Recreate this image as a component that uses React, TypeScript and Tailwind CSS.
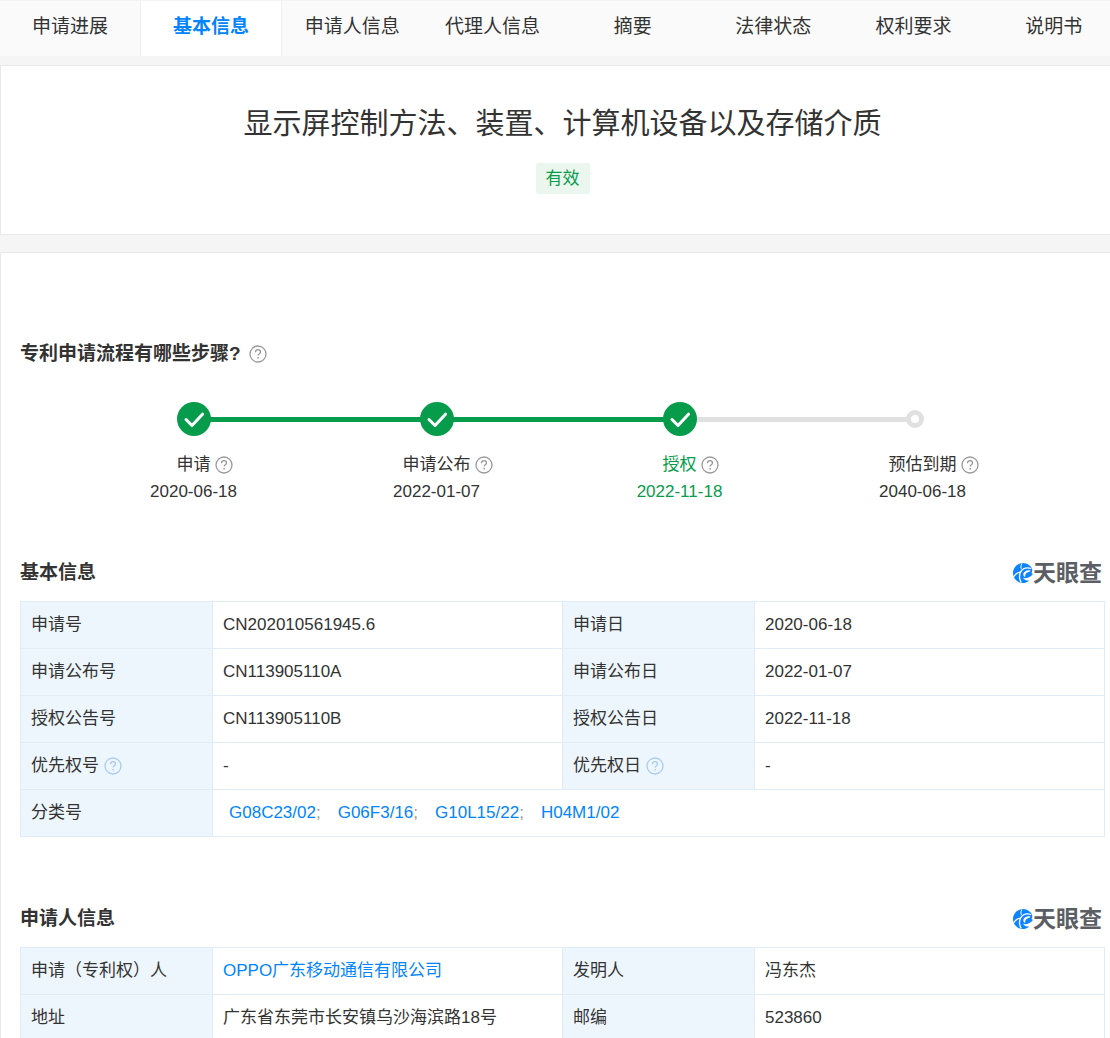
import React from 'react';

const tabs = ['申请进展', '基本信息', '申请人信息', '代理人信息', '摘要', '法律状态', '权利要求', '说明书'];

const steps = [
  { label: '申请', date: '2020-06-18', done: true, line: 'bg-[#079c4b]' },
  { label: '申请公布', date: '2022-01-07', done: true, line: 'bg-[#079c4b]' },
  { label: '授权', date: '2022-11-18', done: true, current: true, line: 'bg-[#e0e0e0]' },
  { label: '预估到期', date: '2040-06-18', done: false },
];

const basicRows = [
  { left: '申请号', leftValue: 'CN202010561945.6', right: '申请日', rightValue: '2020-06-18' },
  { left: '申请公布号', leftValue: 'CN113905110A', right: '申请公布日', rightValue: '2022-01-07' },
  { left: '授权公告号', leftValue: 'CN113905110B', right: '授权公告日', rightValue: '2022-11-18' },
  { left: '优先权号', leftValue: '-', right: '优先权日', rightValue: '-', help: true },
];

const classCodes = ['G08C23/02', 'G06F3/16', 'G10L15/22', 'H04M1/02'];

const HelpIcon = ({ className }: { className: string }) => (
  <svg viewBox="0 0 18 18" className={`w-[18px] h-[18px] shrink-0 ${className}`} fill="none" stroke="currentColor" aria-hidden="true">
    <circle cx="9" cy="9" r="8" strokeWidth="1.3" />
    <path d="M6.500 7.200c0-1.600 1.100-2.500 2.500-2.500s2.500.9 2.500 2.200c0 1.700-2.400 1.900-2.400 3.700" strokeWidth="1.300" />
    <path d="M9.100 12v1.500" strokeWidth="1.500" />
  </svg>
);

const CheckIcon = () => (
  <svg viewBox="0 0 34 34" className="w-[34px] h-[34px] shrink-0" fill="none" aria-hidden="true">
    <circle cx="17" cy="17" r="17" fill="#079c4b" />
    <path d="M9 17.500l6 6L25.500 12.200" stroke="#fff" strokeWidth="3" strokeLinecap="round" strokeLinejoin="round" />
  </svg>
);

const Brand = () => (
  <div className="flex items-center text-[#5c5e64]">
    <svg viewBox="0 0 20 20" className="w-5 h-5" fill="none" aria-hidden="true">
      <path d="M16.500 2.400A10 10 0 1 0 11.500 19.900c2-.3 3.600-1.100 5-2.300-3 .2-5.400-1-6.700-3.200 2.700 1.600 7.500.6 10.100-3.400-.4-.6-.9-.8-1.500-.7.800-1.500 1.100-3 .7-4.500-.4-1.300-1.300-2.500-2.600-3.400z" fill="#0b84ff" />
      <path d="M18.300 5.500C14 4.200 9.800 5.400 7.800 8.600c-2 3.300-1.500 7.300.4 11" stroke="#fff" strokeWidth="1.300" />
      <path d="M7.500 9.100C5 9.300 2.300 11 .5 13.800" stroke="#fff" strokeWidth="1.300" />
      <path d="M9.400 6.600C7.500 5.400 7.400 3 9 .4" stroke="#fff" strokeWidth="1" />
      <path d="M17.600 7.600c-3.200-.9-6.500.4-7.200 3-.4 1.700.4 3 1.900 3.300-.5-2.300.7-4.300 3.200-4.800 1.100-.2 1.900-.7 2.100-1.500z" fill="#fff" />
    </svg>
    <span className="text-[23px] leading-7 font-bold">天眼查</span>
  </div>
);

const SectionHeader = ({ title }: { title: string }) => (
  <div className="flex items-center justify-between pr-[3px]">
    <h2 className="text-[19px] leading-7 font-bold">{title}</h2>
    <Brand />
  </div>
);

const Label = ({ text, help }: { text: string; help?: boolean }) => (
  <th scope="row" className="h-[47px] border border-[#e0ecf6] bg-[#eef6fd] px-[10px] text-left font-normal">
    <span className="flex items-center gap-[5px]">
      {text}
      {help && <HelpIcon className="text-[#a9cbec]" />}
    </span>
  </th>
);

const Value = ({ children, colSpan }: { children: React.ReactNode; colSpan?: number }) => (
  <td colSpan={colSpan} className="border border-[#e0ecf6] px-[10px]">{children}</td>
);

const InfoTable = ({ children }: { children: React.ReactNode }) => (
  <table className="mt-[14px] w-full table-fixed border-collapse leading-6">
    <colgroup>
      <col className="w-[192px]" />
      <col />
      <col className="w-[192px]" />
      <col />
    </colgroup>
    <tbody>{children}</tbody>
  </table>
);

const App: React.FC = () => {
  return (
    <div className="min-h-screen overflow-x-hidden bg-[#f5f5f5] font-['Liberation_Sans','Noto_Sans_CJK_SC',sans-serif] text-[17px] text-[#333]" lang="zh-CN">
      <nav className="grid grid-cols-[140px_142px_repeat(6,1fr)] -mr-[14px] h-14 border-t border-[#f3f3f3] bg-[#fafafa]">
        {tabs.map((tab, i) => (
          <button
            key={tab}
            type="button"
            className={
              i === 1
                ? 'border-x border-[#f0f0f0] bg-white pb-[2px] text-[19px] font-bold text-[#0084ff]'
                : 'pb-[2px] text-[19px]'
            }
          >
            {tab}
          </button>
        ))}
      </nav>

      <header className="mt-[9px] flex flex-col items-center border-y border-l border-[#e9e9e9] bg-white pt-9 pb-10 pl-[14px]">
        <h1 className="text-[29px] leading-[44px]">显示屏控制方法、装置、计算机设备以及存储介质</h1>
        <span className="mt-[17px] rounded-xs bg-[#ebf6ef] px-[10px] leading-[31px] text-[#079c4b]">有效</span>
      </header>

      <main className="mt-[17px] border-t border-l border-[#e9e9e9] bg-white pt-[87px] pr-[5px] pl-[19px]">
        <div className="flex items-center gap-2">
          <h2 className="text-[19px] leading-7 font-bold">专利申请流程有哪些步骤?</h2>
          <HelpIcon className="text-[#999]" />
        </div>

        {/* Application steps */}
        <ol className="mt-[34px] mr-[61px] ml-[52px] grid grid-cols-4">
          {steps.map(step => (
            <li key={step.label} className={step.current ? 'text-[#079c4b]' : ''}>
              <div className="relative flex h-[34px] items-center justify-center">
                {step.line && <span className={`absolute left-1/2 h-[5px] w-full ${step.line}`} />}
                <span className="relative">
                  {step.done ? <CheckIcon /> : <span className="mr-4 block h-[18px] w-[18px] rounded-full border-[5px] border-[#e0e0e0] bg-white" />}
                </span>
              </div>
              <div className="mt-4 ml-[22px] flex items-center justify-center gap-1 leading-[26px]">
                {step.label}
                <HelpIcon className="text-[#999]" />
              </div>
              <div className="text-center leading-7">{step.date}</div>
            </li>
          ))}
        </ol>

        <section className="mt-[53px]">
          <SectionHeader title="基本信息" />
          <InfoTable>
            {basicRows.map(row => (
              <tr key={row.left}>
                <Label text={row.left} help={row.help} />
                <Value>{row.leftValue}</Value>
                <Label text={row.right} help={row.help} />
                <Value>{row.rightValue}</Value>
              </tr>
            ))}
            <tr>
              <Label text="分类号" />
              <Value colSpan={3}>
                <span className="flex gap-[17px] pl-[6px]">
                  {classCodes.map((code, i) => (
                    <span key={code} className="text-[#999]">
                      <a href="#" className="text-[#0084ff]">{code}</a>
                      {i < classCodes.length - 1 && ';'}
                    </span>
                  ))}
                </span>
              </Value>
            </tr>
          </InfoTable>
        </section>

        <section className="mt-[68px]">
          <SectionHeader title="申请人信息" />
          <InfoTable>
            <tr>
              <Label text="申请（专利权）人" />
              <Value><a href="#" className="text-[#0084ff]">OPPO广东移动通信有限公司</a></Value>
              <Label text="发明人" />
              <Value>冯东杰</Value>
            </tr>
            <tr>
              <Label text="地址" />
              <Value>广东省东莞市长安镇乌沙海滨路18号</Value>
              <Label text="邮编" />
              <Value>523860</Value>
            </tr>
          </InfoTable>
        </section>
      </main>
    </div>
  );
};

export default App;
